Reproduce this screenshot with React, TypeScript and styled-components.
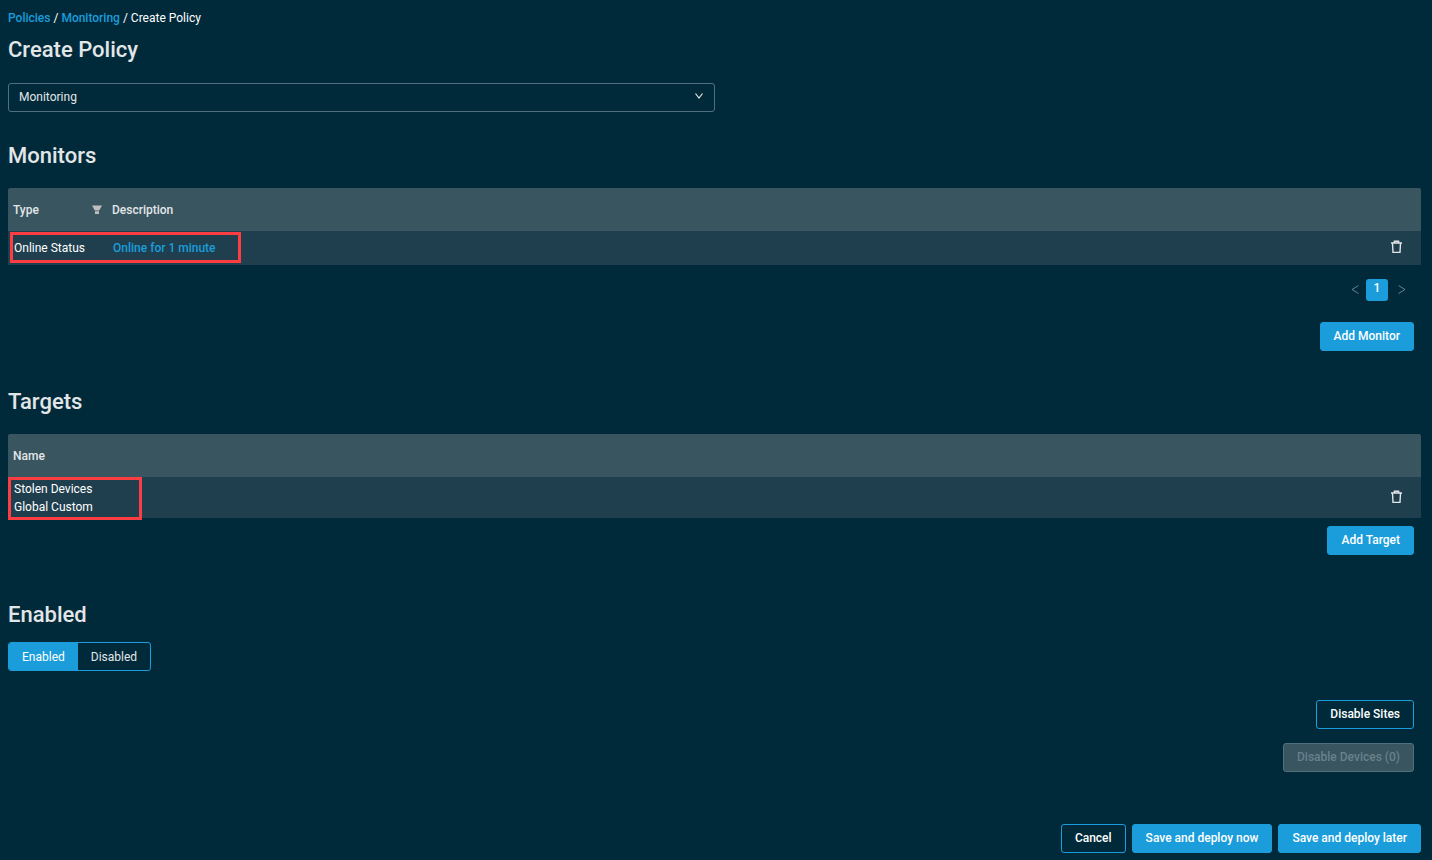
import React, { useState } from 'react';
import styled, { createGlobalStyle, css } from 'styled-components';

const color = {
  page: '#002a3a',
  header: '#385560',
  row: '#1f3f4e',
  accent: '#1b9ddb',
  text: '#e3e6e8',
  muted: '#6b808a',
  mark: '#fc3d42',
};

const GlobalStyle = createGlobalStyle`
  *, *::before, *::after { box-sizing: border-box; }
  body {
    margin: 0;
    background: ${color.page};
    color: ${color.text};
    font: 400 12px/18px Roboto, sans-serif;
  }
  button, select, input { font: inherit; }
`;

const Page = styled.main`
  padding: 9px 11px 7px 8px;
`;

const Breadcrumb = styled.nav`
  display: flex;
  gap: 3px;
  color: #fff;
`;

const Link = styled.a`
  color: ${color.accent};
  font-weight: 500;
  text-decoration: none;
`;

const Title = styled.h1`
  margin: 9px 0 19px;
  font-size: 22px;
  font-weight: 500;
  line-height: 28px;
`;

const SectionTitle = styled.h2<{ $gap?: number }>`
  margin: 0 0 ${(p) => p.$gap ?? 18}px;
  font-size: 22px;
  font-weight: 500;
  line-height: 28px;
`;

const Section = styled.section<{ $top: number }>`
  margin-top: ${(p) => p.$top}px;
`;

const SelectBox = styled.div`
  display: grid;
  align-items: center;
  width: 50%;
  > * { grid-area: 1 / 1; }
  > svg { justify-self: end; margin: 0 11px 3px 0; pointer-events: none; }
`;

const Select = styled.select`
  appearance: none;
  width: 100%;
  height: 29px;
  padding: 0 30px 2px 10px;
  border: 1px solid #52707c;
  border-radius: 3px;
  background: transparent;
  color: ${color.text};
`;

const TableWrap = styled.div`
  position: relative;
`;

const Table = styled.table`
  width: 100%;
  border-collapse: collapse;
  table-layout: fixed;
  border-radius: 2px 2px 0 0;
  overflow: hidden;
`;

const HeadCell = styled.th<{ $width?: number }>`
  width: ${(p) => (p.$width ? `${p.$width}px` : 'auto')};
  height: 43px;
  padding: 0 5px;
  background: ${color.header};
  font-weight: 500;
  text-align: left;
`;

const HeadLabel = styled.div`
  display: flex;
  align-items: center;
  justify-content: space-between;
`;

const Cell = styled.td<{ $height: number }>`
  height: ${(p) => p.$height}px;
  padding: 0 0 0 6px;
  background: ${color.row};
  color: #fff;
`;

const IconButton = styled.button`
  display: flex;
  margin-left: auto;
  padding: 0;
  border: 0;
  background: none;
  color: ${color.text};
  cursor: pointer;
`;

const ActionCell = styled(Cell)`
  padding: 0 18px 2px 0;
`;

const Highlight = styled.div<{ $x: number; $y: number; $w: number; $h: number }>`
  position: absolute;
  left: ${(p) => p.$x}px;
  top: ${(p) => p.$y}px;
  width: ${(p) => p.$w}px;
  height: ${(p) => p.$h}px;
  border: 3px solid ${color.mark};
  pointer-events: none;
`;

const Pager = styled.nav`
  display: flex;
  justify-content: flex-end;
  align-items: center;
  gap: 6px;
  margin: 14px 14px 21px 0;
`;

const PagerArrow = styled.button`
  display: flex;
  align-items: center;
  justify-content: center;
  width: 10px;
  height: 22px;
  padding: 0 0 2px;
  border: 0;
  background: none;
  color: ${color.muted};
  &:last-child { margin-left: 3px; }
`;

const PagerPage = styled.button`
  width: 22px;
  height: 22px;
  padding: 0 0 4px;
  border: 0;
  border-radius: 3px;
  background: ${color.accent};
  color: #fff;
  font-weight: 500;
`;

const Actions = styled.div<{ $top?: number; $inset?: number; $stack?: boolean }>`
  display: flex;
  justify-content: flex-end;
  gap: 6px;
  margin-top: ${(p) => p.$top ?? 0}px;
  padding-right: ${(p) => p.$inset ?? 0}px;
  ${(p) => p.$stack && css`
    flex-direction: column;
    align-items: flex-end;
    gap: 14px;
  `}
`;

const Button = styled.button<{ $outline?: boolean }>`
  height: 29px;
  padding: 0 13px 2px;
  border: 1px solid ${color.accent};
  border-radius: 3px;
  background: ${(p) => (p.$outline ? 'transparent' : color.accent)};
  color: #fff;
  font-weight: 500;
  white-space: nowrap;
  cursor: pointer;
  &:disabled {
    border-color: #52707c;
    background: ${color.header};
    color: ${color.muted};
    cursor: default;
  }
`;

const Toggle = styled.div`
  display: flex;
  width: fit-content;
  border: 1px solid ${color.accent};
  border-radius: 3px;
  overflow: hidden;
`;

const ToggleOption = styled.label`
  display: flex;
  align-items: center;
  height: 27px;
  padding: 0 13px;
  cursor: pointer;
  &:has(input:checked) { background: ${color.accent}; color: #fff; }
  input { appearance: none; width: 0; height: 0; margin: 0; }
`;

const TrashIcon = () => (
  <svg width="13" height="14" viewBox="0 0 13 14" fill="none" stroke="currentColor" strokeWidth="1.4" aria-hidden="true">
    <path d="M1 3H12M4.4 2.8V1.2H8.6V2.8M2.5 3.2L3 12.4H10L10.5 3.2" />
  </svg>
);

const FilterIcon = () => (
  <svg width="10" height="10" viewBox="0 0 10 10" fill="#bfbfbf" aria-hidden="true">
    <path d="M0 0.5H10L7.2 5.4H2.8ZM3 6.2H7V9H3Z" />
  </svg>
);

const Chevron = ({ d, width = 1 }: { d: string; width?: number }) => (
  <svg width="10" height="10" viewBox="0 0 10 10" fill="none" stroke="currentColor" strokeWidth={width} aria-hidden="true">
    <path d={d} />
  </svg>
);

export default function App() {
  const [enabled, setEnabled] = useState(true);

  return (
    <>
      <GlobalStyle />
      <Page>
        <Breadcrumb aria-label="Breadcrumb">
          <Link href="#policies">Policies</Link>
          <span>/</span>
          <Link href="#monitoring">Monitoring</Link>
          <span>/ Create Policy</span>
        </Breadcrumb>
        <Title>Create Policy</Title>
        <SelectBox>
          <Select aria-label="Policy type" defaultValue="Monitoring">
            <option>Monitoring</option>
          </Select>
          <Chevron d="M1.5 2.5L5 7L8.5 2.5" width={1.2} />
        </SelectBox>

        <Section $top={30}>
          <SectionTitle>Monitors</SectionTitle>
          <TableWrap>
            <Table>
              <thead>
                <tr>
                  <HeadCell $width={99}>
                    <HeadLabel>Type <FilterIcon /></HeadLabel>
                  </HeadCell>
                  <HeadCell>Description</HeadCell>
                  <HeadCell $width={60} aria-label="Actions" />
                </tr>
              </thead>
              <tbody>
                <tr>
                  <Cell $height={34}>Online Status</Cell>
                  <Cell $height={34}><Link href="#monitor">Online for 1 minute</Link></Cell>
                  <ActionCell $height={34}>
                    <IconButton aria-label="Delete monitor"><TrashIcon /></IconButton>
                  </ActionCell>
                </tr>
              </tbody>
            </Table>
            <Highlight $x={2} $y={44} $w={231} $h={31} />
          </TableWrap>
          <Pager aria-label="Monitor pages">
            <PagerArrow aria-label="Previous page"><Chevron d="M8.5 1.5L2 5.5L8.5 9.5" /></PagerArrow>
            <PagerPage aria-current="page">1</PagerPage>
            <PagerArrow aria-label="Next page"><Chevron d="M1.5 1.5L8 5.5L1.5 9.5" /></PagerArrow>
          </Pager>
          <Actions $inset={7}>
            <Button>Add Monitor</Button>
          </Actions>
        </Section>

        <Section $top={37}>
          <SectionTitle>Targets</SectionTitle>
          <TableWrap>
            <Table>
              <thead>
                <tr>
                  <HeadCell>Name</HeadCell>
                  <HeadCell $width={60} aria-label="Actions" />
                </tr>
              </thead>
              <tbody>
                <tr>
                  <Cell $height={41}>
                    Stolen Devices
                    <br />
                    Global Custom
                  </Cell>
                  <ActionCell $height={41}>
                    <IconButton aria-label="Delete target"><TrashIcon /></IconButton>
                  </ActionCell>
                </tr>
              </tbody>
            </Table>
            <Highlight $x={0} $y={43} $w={134} $h={43} />
          </TableWrap>
          <Actions $top={8} $inset={7}>
            <Button>Add Target</Button>
          </Actions>
        </Section>

        <Section $top={46}>
          <SectionTitle $gap={13}>Enabled</SectionTitle>
          <Toggle role="radiogroup" aria-label="Policy state">
            <ToggleOption>
              <input type="radio" name="state" checked={enabled} onChange={() => setEnabled(true)} />
              Enabled
            </ToggleOption>
            <ToggleOption>
              <input type="radio" name="state" checked={!enabled} onChange={() => setEnabled(false)} />
              Disabled
            </ToggleOption>
          </Toggle>
        </Section>

        <Actions $top={29} $inset={7} $stack>
          <Button $outline>Disable Sites</Button>
          <Button disabled>Disable Devices (0)</Button>
        </Actions>
        <Actions $top={52}>
          <Button $outline>Cancel</Button>
          <Button>Save and deploy now</Button>
          <Button>Save and deploy later</Button>
        </Actions>
      </Page>
    </>
  );
}
